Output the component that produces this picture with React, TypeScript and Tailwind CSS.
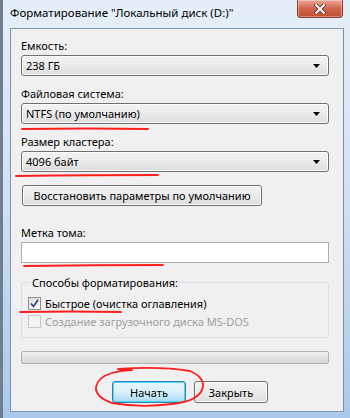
import React from 'react';

const font = { fontFamily: '"Noto Sans", "Open Sans", sans-serif' };

function Combo({ value }: { value: string }) {
  return (
    <div className="flex h-[21px] items-center justify-between rounded-[3px] border border-[#707070] bg-gradient-to-b from-[#f3f3f3] via-[#ebebeb] to-[#dcdcdc] pl-[4px] pr-[8px] shadow-[inset_0_0_0_1px_#fcfcfc]">
      <span className="text-[11px] leading-none text-black">{value}</span>
      <svg width="7" height="4" viewBox="0 0 7 4">
        <path d="M0 0h7L3.5 4z" fill="#000" />
      </svg>
    </div>
  );
}

function Label({ children }: { children: React.ReactNode }) {
  return <div className="h-[15px] text-[11px] leading-[15px] text-black">{children}</div>;
}

function CheckBox({ checked, disabled }: { checked?: boolean; disabled?: boolean }) {
  return (
    <div
      className={
        'flex h-[13px] w-[13px] items-center justify-center border ' +
        (disabled
          ? 'border-[#c8c8c8] bg-[#f4f4f4]'
          : 'border-[#8e8f8f] bg-gradient-to-br from-[#dcdcdc] to-[#fbfbfb]')
      }
    >
      {checked && (
        <svg width="9" height="9" viewBox="0 0 9 9">
          <path d="M1 4.5 L3.5 7.5 L8 0.8" fill="none" stroke="#2a3f7e" strokeWidth="1.6" />
        </svg>
      )}
    </div>
  );
}

export default function App() {
  return (
    <div
      className="relative flex h-[418px] w-[350px] flex-col overflow-hidden bg-gradient-to-b from-[#e6eff9] via-[#cfe0f3] to-[#a9c9ec]"
      style={font}
    >
      {/* desktop strip behind the window */}
      <div className="absolute left-0 top-0 h-full w-[3px] bg-[#6f7f90]" />

      {/* Title bar */}
      <div className="flex h-[28px] shrink-0 items-start">
        <div className="pl-[10px] pt-[5px] text-[11.5px] leading-[16px] text-black">
          Форматирование "Локальный диск (D:)"
        </div>
        <button className="ml-auto mr-[7px] flex h-[18px] w-[46px] items-center justify-center rounded-b-[4px] border border-t-0 border-[#8c3a2a] bg-gradient-to-b from-[#e9a795] via-[#d3644c] to-[#c24a31] shadow-[inset_0_0_0_1px_rgba(255,255,255,0.35)]">
          <svg width="12" height="10" viewBox="0 0 12 10">
            <path d="M2 1 L10 9 M10 1 L2 9" stroke="#5a2a20" strokeWidth="3.4" strokeLinecap="square" />
            <path d="M2 1 L10 9 M10 1 L2 9" stroke="#ffffff" strokeWidth="2" strokeLinecap="square" />
          </svg>
        </button>
      </div>

      {/* Client area */}
      <div className="ml-[10px] mr-[6px] flex h-[384px] flex-col border border-[#8193a8] bg-[#f0f0f0] pl-[10px] pr-[14px] pt-[9px] text-black">
        <Label>Емкость:</Label>
        <div className="mt-[2px]">
          <Combo value="238 ГБ" />
        </div>

        <div className="mt-[10px]">
          <Label>Файловая система:</Label>
        </div>
        <div className="mt-[2px]">
          <Combo value="NTFS (по умолчанию)" />
        </div>

        <div className="mt-[10px]">
          <Label>Размер кластера:</Label>
        </div>
        <div className="mt-[2px]">
          <Combo value="4096 байт" />
        </div>

        <div className="mt-[13px] pl-[1px]">
          <button className="flex h-[21px] w-[240px] items-center justify-center rounded-[3px] border border-[#707070] bg-gradient-to-b from-[#f3f3f3] via-[#ebebeb] to-[#dcdcdc] text-[11px] leading-none shadow-[inset_0_0_0_1px_#fcfcfc]">
            Восстановить параметры по умолчанию
          </button>
        </div>

        <div className="mt-[19px]">
          <Label>Метка тома:</Label>
        </div>
        <div className="mt-[2px] h-[21px] border border-[#abadb3] bg-white" />

        <fieldset className="mt-[12px] h-[63px] rounded-[3px] border border-[#d5dfe5] px-[6px]">
          <legend className="ml-[2px] px-[2px] text-[11px] leading-[15px]">Способы форматирования:</legend>
          <div className="mt-[6px] flex h-[15px] items-center gap-[4px]">
            <CheckBox checked />
            <span className="text-[11px] leading-none">Быстрое (очистка оглавления)</span>
          </div>
          <div className="mt-[3px] flex h-[15px] items-center gap-[4px]">
            <CheckBox disabled />
            <span className="text-[11px] leading-none text-[#a0a0a0]">Создание загрузочного диска MS-DOS</span>
          </div>
        </fieldset>

        <div className="mt-[13px] h-[13px] rounded-[2px] border border-[#b2b2b2] bg-gradient-to-b from-[#f2f2f2] via-[#e2e2e2] to-[#d7d7d7]" />

        <div className="ml-[91px] mt-[17px] flex gap-[8px]">
          <button className="flex h-[22px] w-[74px] items-center justify-center rounded-[3px] border border-[#3c7fb1] bg-gradient-to-b from-[#eaf6fd] via-[#d9f0fc] to-[#a7d9f5] text-[11px] leading-none shadow-[inset_0_0_0_1px_#48d6fb]">
            Начать
          </button>
          <button className="flex h-[22px] w-[74px] items-center justify-center rounded-[3px] border border-[#707070] bg-gradient-to-b from-[#f3f3f3] via-[#ebebeb] to-[#dcdcdc] text-[11px] leading-none shadow-[inset_0_0_0_1px_#fcfcfc]">
            Закрыть
          </button>
        </div>
      </div>

      {/* red hand-drawn annotations over the dialog */}
      <svg className="pointer-events-none absolute left-0 top-0" width="350" height="418" viewBox="0 0 350 418">
        <g fill="none" stroke="#ff1f1f" strokeWidth="1.8" strokeLinecap="round">
          <path d="M22 129 Q90 128 148 129" />
          <path d="M16 176 Q90 175 158 175" />
          <path d="M24 266 Q95 265 163 265" />
          <path d="M20 312 Q70 311 121 312" />
          <path d="M118 369 Q160 366 190 371 Q204 377 203 387 Q200 401 172 404 Q140 408 112 403 Q95 397 96 387 Q98 377 112 373 Q122 370 132 370" />
        </g>
      </svg>
    </div>
  );
}
